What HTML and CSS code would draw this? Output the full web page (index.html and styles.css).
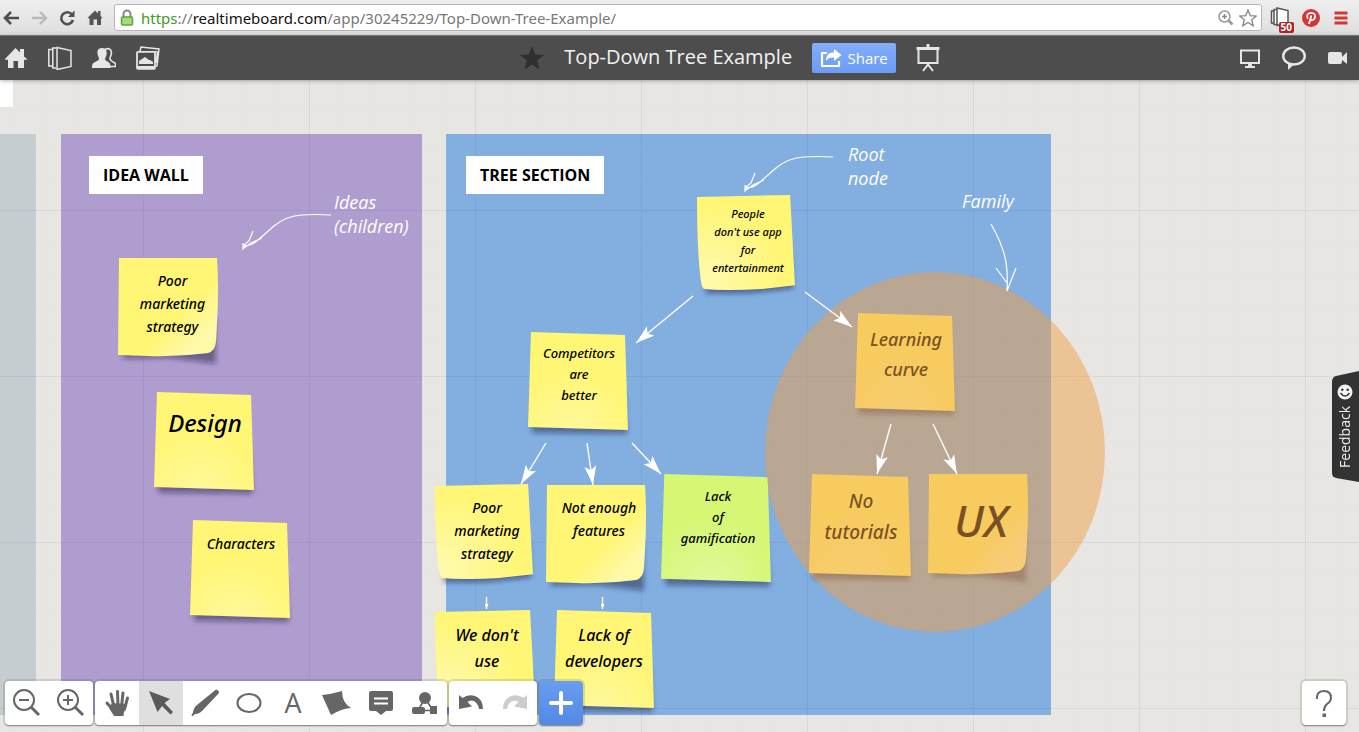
FILE: index.html
```html
<!DOCTYPE html>
<html lang="en">
<head>
<meta charset="utf-8">
<title>Top-Down Tree Example</title>
<link rel="stylesheet" href="styles.css">
</head>
<body>
<svg class="defs" aria-hidden="true">
  <defs>
    <filter id="soft" x="-20%" y="-20%" width="140%" height="150%"><feGaussianBlur stdDeviation="2.5"/></filter>
    <radialGradient id="glow" cx=".45" cy="1" r=".6"><stop offset="0" stop-color="#fff" stop-opacity=".28"/><stop offset="1" stop-color="#fff" stop-opacity="0"/></radialGradient>
    <radialGradient id="glowLeft" cx=".1" cy=".9" r=".8"><stop offset="0" stop-color="#fff" stop-opacity=".4"/><stop offset="1" stop-color="#fff" stop-opacity="0"/></radialGradient>
    <linearGradient id="curl" x1=".2" y1=".2" x2="1" y2="1"><stop offset=".5" stop-color="#fff" stop-opacity="0"/><stop offset=".82" stop-color="#fff" stop-opacity=".4"/><stop offset="1" stop-color="#fff" stop-opacity=".2"/></linearGradient>
    <symbol id="flat" viewBox="0 0 100 100" preserveAspectRatio="none" overflow="visible">
      <path d="M5 60L96 60L99 104L4 103z" fill="#14143c" fill-opacity=".45" filter="url(#soft)"/>
      <path d="M3 0L97 3L100 100L0 97z" fill="currentColor"/>
      <path d="M3 0L97 3L100 100L0 97z" fill="url(#glow)"/>
    </symbol>
    <symbol id="curl-right" viewBox="0 0 100 100" preserveAspectRatio="none" overflow="visible">
      <path d="M6 60L97 60L98 108L50 102L5 103z" fill="#14143c" fill-opacity=".45" filter="url(#soft)"/>
      <path d="M1 0L99 0Q101 30 99 65L98 85Q97 95 90 97Q60 101 30 100L0 99z" fill="currentColor"/>
      <path d="M1 0L99 0Q101 30 99 65L98 85Q97 95 90 97Q60 101 30 100L0 99z" fill="url(#curl)"/>
    </symbol>
    <symbol id="curl-left" viewBox="0 0 100 100" preserveAspectRatio="none" overflow="visible">
      <path d="M10 60L96 60L98 99L50 104L9 104z" fill="#14143c" fill-opacity=".45" filter="url(#soft)"/>
      <path d="M0 2L95 0L100 95L65 99Q30 101 8 99Q5 99 4 90Q0 60 0 2z" fill="currentColor"/>
      <path d="M0 2L95 0L100 95L65 99Q30 101 8 99Q5 99 4 90Q0 60 0 2z" fill="url(#glowLeft)"/>
    </symbol>
    <symbol id="sketch-arrow" viewBox="0 0 100 50">
      <path d="M93 9Q77 8 64 9Q48 10 36 20Q27 28 20 34Q14 40 5 40M15 25L11 35L5 40M24 32L13 37L6 42M5 37L5 43L8 39" fill="none" stroke="#fff" stroke-width="1.2"/>
    </symbol>
    <marker id="head" markerUnits="userSpaceOnUse" markerWidth="20" markerHeight="14" refX="19" refY="6" orient="auto"><path d="M0 0Q9 3 19 6Q9 9 0 12L4 6z" fill="#fff"/></marker>
    <marker id="head-small" markerUnits="userSpaceOnUse" markerWidth="6" markerHeight="4" refX="5" refY="2" orient="auto"><path d="M0 0L5 2L0 4z" fill="#fff"/></marker>
  </defs>
</svg>

<div class="browser">
  <div class="browser-nav">
    <button aria-label="Back"><svg viewBox="0 0 18 18"><path d="M17 9H3M9 3L3 9L9 15" fill="none" stroke="#505050" stroke-width="2.600"/></svg></button>
    <button aria-label="Forward"><svg viewBox="0 0 18 18"><path d="M2 9h14M10 3l6 6L10 15" fill="none" stroke="#b9b9b9" stroke-width="2.300"/></svg></button>
    <button aria-label="Reload"><svg viewBox="0 0 18 18"><path d="M14 5.500A6 6 0 1 0 15 11" fill="none" stroke="#505050" stroke-width="2.600"/><path d="M16.500 1.500V8H10z" fill="#505050"/></svg></button>
    <button aria-label="Home page"><svg viewBox="0 0 18 18"><path d="M1.500 9L9 1.500L12 4.500V2H14.500V7L16.500 9L15 9.500V16H11V10.500H7.500V16H3.500V9.500z" fill="#555"/></svg></button>
  </div>
  <div class="omnibox">
    <svg class="lock" viewBox="0 0 14 18"><path d="M3.500 9V5a3.500 3.500 0 0 1 7 0V9" fill="none" stroke="#888" stroke-width="2"/><rect x="1.500" y="8" width="11" height="8" rx="1" fill="#a9d978" stroke="#57a744" stroke-width="1.500"/></svg>
    <div class="url" role="textbox" aria-label="Address" contenteditable="true" spellcheck="false"><span class="secure">https</span>://<span class="host">realtimeboard.com</span>/app/30245229/Top-Down-Tree-Example/</div>
    <button aria-label="Zoom"><svg viewBox="0 0 18 18"><circle cx="7.500" cy="7.500" r="5.500" fill="none" stroke="#999" stroke-width="1.500"/><path d="M5 7.500h5M7.500 5v5" stroke="#888" stroke-width="1.400"/><path d="M11.500 11.500L15.500 15.500" stroke="#999" stroke-width="2.500"/></svg></button>
    <button aria-label="Bookmark this page"><svg viewBox="0 0 18 18"><path d="M9 1L11.300 6.600L17.300 7L12.700 10.900L14.200 16.800L9 13.500L3.800 16.800L5.300 10.900L.7 7L6.700 6.600z" fill="#fff" stroke="#858585" stroke-width="1.300"/></svg></button>
  </div>
  <div class="extensions">
    <button class="ext-board" aria-label="Board extension, 50"><svg viewBox="0 0 24 24"><path d="M4 5H1.500V17H4M7 3.500H4V18.500H7M7 2L18 4.500V17L7 19.500z" fill="#fff" stroke="#555" stroke-width="1.500"/></svg><span class="count">50</span></button>
    <button aria-label="Pin it"><svg viewBox="0 0 18 18"><circle cx="9" cy="9" r="9" fill="#d73532"/><path d="M5.800 9.800C3.800 6.500 6 3.800 9.200 3.800C12.300 3.800 13.700 6 13 8.500C12.300 11 9.500 12 8.300 10.300M9.300 6.500L7 15" fill="none" stroke="#fff" stroke-width="1.800"/></svg></button>
    <button aria-label="Menu"><svg viewBox="0 0 18 18"><path d="M2.500 4h13M2.500 9h13M2.500 14h13" stroke="#d03a35" stroke-width="3"/></svg></button>
  </div>
</div>

<header class="app-bar">
  <nav class="app-left">
    <button aria-label="Dashboard"><svg viewBox="0 0 24 24"><path d="M1 13L11.500 2L16 6.500V3H20V10.500L23 13V13.800H20V22H14V15H9.500V22H4V13.800H1z" fill="#e6e6e6"/></svg></button>
    <button aria-label="Boards"><svg viewBox="0 0 24 24"><path d="M4 3.500H.8V20H4M8 2H4.800V22H8M9 1.500L23 4.500V20.500L9 23.500z" fill="none" stroke="#e6e6e6" stroke-width="1.500"/></svg></button>
    <button aria-label="People"><svg viewBox="0 0 24 24"><path d="M13 3.500C18 1 21 5 18.500 10.500C17 14 19 15 23.500 17.500V20.500H18" fill="none" stroke="#e6e6e6" stroke-width="1.600"/><path d="M10 2C15 2 15.500 7 14 10.500C12.500 13.500 13 14 15 15.300C18 17 18.500 17.500 18.500 22H0C0 17.500 1 17 4.500 15.300C7 14 7.500 13.500 6.500 11C4.500 6.500 5 2 10 2z" fill="#e6e6e6"/></svg></button>
    <button aria-label="Pictures"><svg viewBox="0 0 24 24"><path d="M4 5L5 1L23 3L21 20H20M20 17L21.500 6L19 5.500" fill="none" stroke="#e6e6e6" stroke-width="1.500"/><rect x="1" y="5.800" width="18" height="17" rx="1" fill="#4d4d4d" stroke="#e6e6e6" stroke-width="1.800"/><path d="M3 18V15L9 11L13 14H14L17 16V18z" fill="#e6e6e6"/><path d="M1 20H19V23H1z" fill="#e6e6e6"/></svg></button>
  </nav>
  <div class="app-center">
    <button aria-label="Favourite"><svg viewBox="0 0 24 24"><path d="M12 0L15.200 8.400L24 8.900L17.200 14.500L19.500 23.500L12 18.500L4.500 23.500L6.800 14.500L0 8.900L8.800 8.400z" fill="#2f2f2f"/></svg></button>
    <h1>Top-Down Tree Example</h1>
    <button class="share"><svg viewBox="0 0 22 20"><path d="M7 5H2V18H19V13" fill="none" stroke="#fff" stroke-width="2.200"/><path d="M6 13C6 7 9 4.500 14 4.500V1L21.500 7L14 13V9.500C10 9.500 8 10 6 13z" fill="#fff"/></svg>Share</button>
    <button aria-label="Presentation"><svg class="easel" viewBox="0 0 24 28"><path d="M10.500 0h3v3h-3zM.5 3h23v3H.5z" fill="#e6e6e6"/><path d="M2.500 6V19H21.500V6M7 27L12 20.500L17 27" fill="none" stroke="#e6e6e6" stroke-width="2"/></svg></button>
  </div>
  <div class="app-right">
    <button aria-label="Screen sharing"><svg viewBox="0 0 24 24"><path d="M3 4.500H21V17H3z" fill="none" stroke="#e6e6e6" stroke-width="2"/><path d="M10 17h4v3h3v2H7v-2h3z" fill="#e6e6e6"/></svg></button>
    <button aria-label="Chat"><svg viewBox="0 0 24 24"><ellipse cx="12" cy="10" rx="10.800" ry="8.500" fill="none" stroke="#e6e6e6" stroke-width="2.400"/><path d="M6 17V24L12.500 18z" fill="#e6e6e6"/></svg></button>
    <button aria-label="Video call"><svg viewBox="0 0 24 24"><rect x="2" y="6" width="14" height="12" rx="2" fill="#e6e6e6"/><path d="M15.500 11.500L21 6V18L15.500 13.500z" fill="#e6e6e6"/></svg></button>
  </div>
</header>

<main class="board">
  <div class="section section-grey"></div>
  <div class="section section-purple"></div>
  <div class="section section-blue"></div>
  <svg class="layer" aria-hidden="true">
    <defs><pattern id="grid" x="143" y="130" width="166" height="166" patternUnits="userSpaceOnUse">
      <path d="M.5 0V166M0 .5H166" stroke="#2a2a60" stroke-opacity=".07"/>
      <path d="M33.500 0V166M66.500 0V166M100.500 0V166M133.500 0V166M0 33.500H166M0 66.500H166M0 100.500H166M0 133.500H166" stroke="#2a2a60" stroke-opacity=".012"/>
    </pattern></defs>
    <rect width="100%" height="100%" fill="url(#grid)"/>
  </svg>
  <div class="tag tag-edge"></div>
  <h2 class="tag tag-idea">IDEA WALL</h2>
  <h2 class="tag tag-tree">TREE SECTION</h2>

  <article class="note n1"><svg><use href="#curl-right"/></svg><p>Poor<br>marketing<br>strategy</p></article>
  <article class="note n2"><svg><use href="#flat"/></svg><p>Design</p></article>
  <article class="note n3"><svg><use href="#flat"/></svg><p>Characters</p></article>
  <article class="note n4"><svg><use href="#curl-left"/></svg><p>People<br>don't use app<br>for<br>entertainment</p></article>
  <article class="note n5"><svg><use href="#flat"/></svg><p>Competitors<br>are<br>better</p></article>
  <article class="note n6"><svg><use href="#curl-left"/></svg><p>Poor<br>marketing<br>strategy</p></article>
  <article class="note n7"><svg><use href="#curl-right"/></svg><p>Not enough<br>features</p></article>
  <article class="note n8 green"><svg><use href="#flat"/></svg><p>Lack<br>of<br>gamification</p></article>
  <article class="note n9"><svg><use href="#flat"/></svg><p>Learning<br>curve</p></article>
  <article class="note n10"><svg><use href="#flat"/></svg><p>No<br>tutorials</p></article>
  <article class="note n11"><svg><use href="#curl-right"/></svg><p>UX</p></article>
  <article class="note n12"><svg><use href="#curl-left"/></svg><p>We don't<br>use</p></article>
  <article class="note n13"><svg><use href="#flat"/></svg><p>Lack of<br>developers</p></article>

  <svg class="layer" aria-hidden="true">
    <g transform="translate(0 -80)">
      <ellipse cx="935" cy="452" rx="170" ry="180" fill="#f0a046" fill-opacity=".5"/>
      <use href="#sketch-arrow" x="238" y="206" width="100" height="50"/>
      <use href="#sketch-arrow" x="740" y="148" width="100" height="50"/>
      <path d="M991 224Q1003 245 1006 262Q1008 275 1007 291M996 268L1007 283M1016 268L1007 291" fill="none" stroke="#fff" stroke-width="1.200"/>
      <g stroke="#fff" stroke-width="1.400">
        <path d="M693 296L636 343" marker-end="url(#head)"/>
        <path d="M805 292L852 327" marker-end="url(#head)"/>
        <path d="M546 443L521 484" marker-end="url(#head)"/>
        <path d="M587 443L593 485" marker-end="url(#head)"/>
        <path d="M632 443L661 474" marker-end="url(#head)"/>
        <path d="M891 424L877 474" marker-end="url(#head)"/>
        <path d="M933 424L957 474" marker-end="url(#head)"/>
        <path d="M486.500 597V609" marker-end="url(#head-small)"/>
        <path d="M602.500 597V609" marker-end="url(#head-small)"/>
      </g>
    </g>
  </svg>
  <p class="caption caption-ideas">Ideas<br>(children)</p>
  <p class="caption caption-root">Root<br>node</p>
  <p class="caption caption-family">Family</p>

  <button class="feedback"><svg class="feedback-bg" viewBox="0 0 28 116" preserveAspectRatio="none"><path d="M28 1L5 6Q1 7 1 12V103Q1 107 5 108L28 112z" fill="#333"/></svg><span>Feedback</span><svg class="smile" viewBox="0 0 16 16"><circle cx="8" cy="8" r="7.500" fill="#f4f4f4"/><circle cx="5.300" cy="5.800" r="1.200" fill="#333"/><circle cx="10.700" cy="5.800" r="1.200" fill="#333"/><path d="M3.500 9Q8 15 12.500 9" fill="none" stroke="#333" stroke-width="1.400"/></svg></button>

  <div class="toolbar">
    <div class="tools">
      <button aria-label="Zoom out"><svg viewBox="0 0 44 44"><g fill="none" stroke="#666" stroke-width="2"><circle cx="19" cy="19" r="10"/><path d="M14 19h10"/><path d="M26 26L34 34" stroke-width="3"/></g></svg></button>
      <button aria-label="Zoom in"><svg viewBox="0 0 44 44"><g fill="none" stroke="#666" stroke-width="2"><circle cx="19" cy="19" r="10"/><path d="M14 19h10M19 14v10"/><path d="M26 26L34 34" stroke-width="3"/></g></svg></button>
    </div>
    <div class="tools">
      <button aria-label="Hand"><svg viewBox="0 0 44 44"><g fill="none" stroke="#666" stroke-width="3" stroke-linecap="round"><path d="M12 22L19 30M16 13L19 26M22.500 10.500L23 25M28 12L26.500 26M32.500 17L29.500 28"/></g><path d="M17 22L31 23Q32 27 29 31L28.500 35H19L14 27z" fill="#666"/></svg></button>
      <button class="active" aria-label="Select"><svg viewBox="0 0 44 44"><path d="M10 10L31 18L25.500 22L34 31L31.500 33.500L23 25L18.500 31z" fill="#5a5a5a"/></svg></button>
      <button aria-label="Pen"><svg viewBox="0 0 44 44"><path d="M33 8.500Q36 9 36 12L20 29Q16 33.500 12 33L9 35.500L8.500 34L10 31.500Q10.500 27 14 24z" fill="#666"/></svg></button>
      <button aria-label="Shape"><svg viewBox="0 0 44 44"><ellipse cx="22" cy="22" rx="11.500" ry="9" fill="none" stroke="#666" stroke-width="2"/></svg></button>
      <button class="letter" aria-label="Text">A</button>
      <button aria-label="Sticker"><svg viewBox="0 0 44 44"><path d="M7 14Q17 13 27 10Q27 22 36 27Q28 27 16 34z" fill="#666"/></svg></button>
      <button aria-label="Comment"><svg viewBox="0 0 44 44"><path d="M12 10H32Q34 10 34 12V28Q34 30 32 30H27L22 34L17 30H12Q10 30 10 28V12Q10 10 12 10z" fill="#666"/><path d="M15 17.500h14M15 22.500h14" stroke="#fff" stroke-width="2"/></svg></button>
      <button aria-label="Template"><svg viewBox="0 0 44 44"><path d="M22 17L16 28M22 17L29 28M18 29.500H29" stroke="#666" stroke-width="1.600"/><circle cx="22" cy="17" r="6" fill="#666"/><rect x="9" y="26" width="13" height="7" rx="2" fill="#666"/><path d="M27 25H34V33H27z" fill="#666"/></svg></button>
    </div>
    <div class="tools">
      <button aria-label="Undo"><svg viewBox="0 0 44 44"><path d="M10 14L13.500 17Q19 13 26 15Q34 18 34 28H30Q29 21 23 19.500Q20 19.500 18.500 21L23 25.500L10 28z" fill="#666"/></svg></button>
      <button aria-label="Redo" disabled><svg viewBox="0 0 44 44"><path d="M34 14L30.500 17Q25 13 18 15Q10 18 10 28H14Q15 21 21 19.500Q24 19.500 25.500 21L21 25.500L34 28z" fill="#ccc"/></svg></button>
    </div>
    <button class="add" aria-label="Add"><svg viewBox="0 0 44 44"><path d="M12 22H32M22 12V32" stroke="#fff" stroke-width="4" stroke-linecap="round"/></svg></button>
  </div>
  <button class="help" aria-label="Help"><svg viewBox="0 0 44 44"><path d="M15 18V16Q15.500 10 22 10Q29 10 29 17Q29 20 25 23Q22 25.500 22 30" fill="none" stroke="#666" stroke-width="2"/><path d="M20.500 32.500h3.500v3.500h-3.500z" fill="#666"/></svg></button>
</main>
</body>
</html>
```
FILE: styles.css
```css
* { box-sizing: border-box; }
html, body { height: 100%; }
body {
  margin: 0;
  display: flex;
  flex-direction: column;
  overflow: hidden;
  font-family: "Open Sans", "Noto Sans", sans-serif;
}
h1, h2, p { margin: 0; }
button {
  padding: 0;
  border: 0;
  background: none;
  color: inherit;
  font: inherit;
  display: flex;
  align-items: center;
  justify-content: center;
  flex: none;
}
svg { display: block; }
.defs { position: absolute; width: 0; height: 0; }

/* Browser chrome */
.browser {
  height: 35px;
  flex: none;
  display: flex;
  align-items: center;
  gap: 8px;
  padding: 0 9px 0 2px;
  background: linear-gradient(#efefef, #dedede);
}
.browser-nav { display: flex; gap: 10px; padding-right: 2px; }
.browser svg { width: 18px; height: 18px; }
.omnibox {
  flex: 1;
  height: 27px;
  display: flex;
  align-items: center;
  gap: 4px;
  padding: 0 4px 0 5px;
  background: #fff;
  border: 1px solid #b4b4b4;
  border-radius: 3px;
}
.browser .lock { width: 14px; }
.url {
  flex: 1;
  padding-left: 3px;
  font: 15px/24px "Noto Sans", sans-serif;
  color: #777;
  white-space: nowrap;
}
.secure { color: #3f9b25; }
.host { color: #111; }
.extensions { display: flex; align-items: center; gap: 8px; }
.ext-board { position: relative; }
.browser .ext-board svg { width: 24px; height: 24px; }
.count {
  position: absolute;
  right: 0;
  bottom: -3px;
  padding: 0 2px;
  border-radius: 2px;
  background: #b32225;
  color: #fff;
  font: bold 10px/11px "Open Sans", sans-serif;
}
.extensions button:last-child { margin-left: 4px; }

/* Application bar */
.app-bar {
  height: 45px;
  flex: none;
  display: flex;
  align-items: center;
  padding: 0 9px 0 4px;
  background: #4d4d4d;
  border-top: 1px solid #777;
  box-shadow: 0 1px 4px rgba(0, 0, 0, .3);
  position: relative;
  z-index: 1;
  color: #f2f2f2;
}
.app-bar svg { width: 24px; height: 24px; }
.app-bar .easel { height: 28px; }
.app-left, .app-right { display: flex; gap: 20px; }
.app-left { flex: 5 1 0; }
.app-right { flex: 4 1 0; justify-content: flex-end; }
.app-center { display: flex; align-items: center; gap: 20px; padding-left: 4px; }
h1 { padding-bottom: 2px; font-size: 20px; line-height: 28px; font-weight: 400; white-space: nowrap; }
.share {
  width: 84px;
  height: 30px;
  gap: 5px;
  border-radius: 2px;
  background: linear-gradient(#83adfb, #6c9cf6);
  font-size: 15px;
  color: #fff;
}
.app-bar .share svg { width: 22px; height: 20px; }

/* Board */
.board {
  flex: 1;
  position: relative;
  overflow: hidden;
  background: #e7e6e3;
}
.layer { position: absolute; inset: 0; width: 100%; height: 100%; }
.section { position: absolute; top: 54px; height: 581px; }
.section-grey { left: 0; width: 36px; background: #c5cdd0; }
.section-purple { left: 61px; width: 361px; background: #b09dcf; }
.section-blue { left: 446px; width: 605px; background: #82aee0; }
.tag {
  position: absolute;
  top: 76px;
  padding: 0 14px;
  background: #fff;
  color: #000;
  font: bold 16px/38px "Open Sans", sans-serif;
  white-space: nowrap;
}
.tag-edge { left: 0; top: 0; width: 13px; height: 27px; padding: 0; }
.tag-idea { left: 89px; }
.tag-tree { left: 466px; }

.note {
  position: absolute;
  width: 100px;
  height: 98px;
  color: #fff676;
  font: italic 500 14px/23px "Noto Sans", sans-serif;
  text-align: center;
}
.note svg { position: absolute; inset: 0; width: 100%; height: 100%; overflow: visible; }
.note p { position: relative; color: #000; white-space: nowrap; }
.green { color: #d5f774; }
.n1 { left: 118px; top: 178px; padding: 11px 0 0 9px; }
.n2 { left: 154px; top: 312px; font-size: 24px; line-height: 32px; padding: 15px 0 0 2px; }
.n3 { left: 190px; top: 440px; padding: 12px 0 0 2px; }
.n4 { left: 697px; top: 115px; width: 98px; height: 95px; font-size: 11px; line-height: 18px; padding: 10px 0 0 4px; }
.n5 { left: 528px; top: 252px; font-size: 13px; line-height: 21px; padding: 11px 0 0 2px; }
.n6 { left: 435px; top: 404px; width: 98px; height: 95px; padding: 12px 0 0 6px; }
.n7 { left: 546px; top: 405px; padding: 11px 0 0 6px; }
.n8 { left: 661px; top: 394px; width: 110px; height: 108px; font-size: 13px; line-height: 21px; padding: 12px 0 0 4px; }
.n9 { left: 855px; top: 233px; font-size: 18px; line-height: 30px; padding: 11px 0 0 2px; }
.n10 { left: 809px; top: 394px; width: 102px; height: 102px; font-size: 19px; line-height: 31px; padding: 12px 0 0 2px; }
.n11 { left: 928px; top: 394px; height: 100px; font-size: 44px; line-height: 56px; padding: 18px 0 0 6px; }
.n12 { left: 435px; top: 530px; font-size: 16px; line-height: 26px; padding: 12px 0 0 4px; }
.n13 { left: 554px; top: 530px; font-size: 16px; line-height: 26px; padding-top: 12px; }

.caption {
  position: absolute;
  color: #fff;
  font: italic 18px/24px "Open Sans", sans-serif;
  white-space: nowrap;
}
.caption-ideas { left: 334px; top: 110px; }
.caption-root { left: 848px; top: 62px; }
.caption-family { left: 962px; top: 109px; }

.feedback {
  position: absolute;
  right: 0;
  top: 290px;
  width: 28px;
  height: 116px;
  padding-bottom: 4px;
  flex-direction: column-reverse;
  gap: 6px;
  color: #eee;
  font-size: 14px;
  line-height: 18px;
}
.feedback span { position: relative; writing-mode: vertical-rl; transform: rotate(180deg); }
.feedback-bg { position: absolute; inset: 0; width: 100%; height: 100%; }
.smile { position: relative; width: 16px; height: 16px; }

/* Toolbar */
.toolbar {
  position: absolute;
  left: 5px;
  bottom: 7px;
  display: flex;
  gap: 2px;
}
.tools, .add, .help {
  display: flex;
  overflow: hidden;
  border-radius: 4px;
  background: #fff;
  box-shadow: 0 0 0 2px rgba(60, 60, 50, .16), 0 1px 0 0 rgba(0, 0, 0, .3);
}
.tools button, .add, .help { width: 44px; height: 44px; }
.toolbar svg, .help svg { width: 44px; height: 44px; }
.tools .active { background: #dfdfdf; }
.tools .letter { color: #666; font-size: 27px; line-height: 44px; }
.add { background: linear-gradient(#6a9cf2, #5389e4); }
.help { position: absolute; right: 13px; bottom: 7px; }
```
